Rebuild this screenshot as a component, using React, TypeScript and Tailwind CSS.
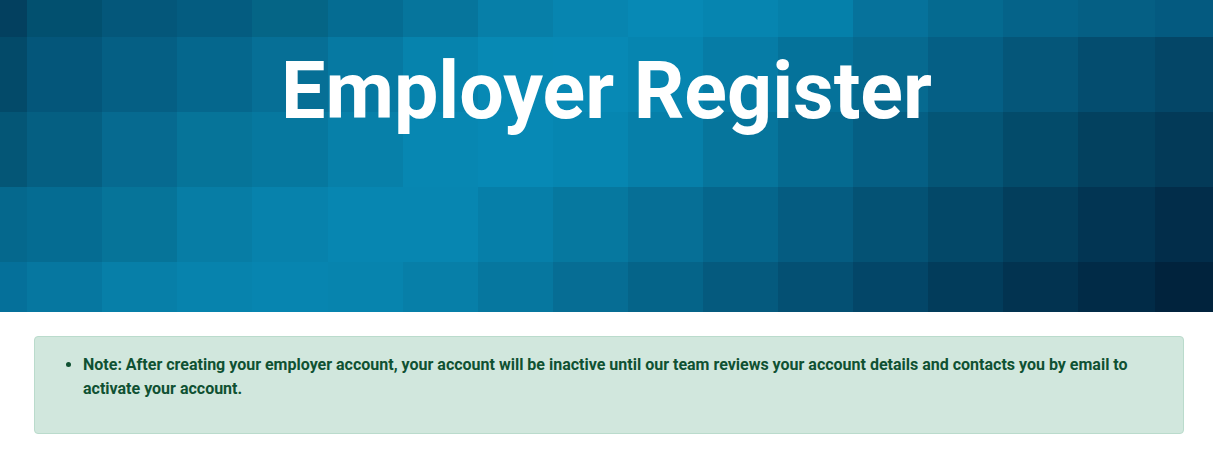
import React from 'react';

// mosaic tile colours, 5 rows x 17 columns
const tiles: string[][] = [
  ['#03405f', '#02506f', '#04577a', '#045c80', '#056586', '#056c92', '#06759c', '#077fa8', '#0785b0', '#0789b5', '#0685b0', '#0580aa', '#06729b', '#056a90', '#056389', '#055f84', '#045a80'],
  ['#034a69', '#04567a', '#055f84', '#05678d', '#066f96', '#0679a2', '#0683ad', '#0789b4', '#0789b5', '#0685b0', '#067ca6', '#05729a', '#066a90', '#055f85', '#055679', '#044d6f', '#044667'],
  ['#045676', '#055f82', '#066a90', '#067499', '#06789f', '#0780a9', '#0787b2', '#0789b5', '#0686b1', '#067fa9', '#06759c', '#056a90', '#055f84', '#045576', '#034b6a', '#03415f', '#033a58'],
  ['#05688d', '#056c92', '#067499', '#077da5', '#0782ac', '#0786b1', '#0786b1', '#067fa9', '#06789f', '#066f96', '#05668c', '#055c81', '#045274', '#034868', '#033e5c', '#023553', '#022d4a'],
  ['#05709a', '#0677a0', '#077fa8', '#0783ad', '#0785b0', '#0784ae', '#077fa8', '#06779f', '#066d94', '#056489', '#055a7e', '#045073', '#034668', '#023c5b', '#023350', '#012b47', '#01233d'],
];

const colX = [0, 27, 102, 177, 252, 328, 403, 478, 553, 628, 703, 778, 853, 928, 1003, 1078, 1155, 1213];
const rowY = [0, 37, 112, 187, 262, 312];

function Mosaic() {
  return (
    <svg className="absolute inset-0 w-full h-full" viewBox="0 0 1213 312" preserveAspectRatio="none">
      {tiles.map((row, r) =>
        row.map((c, i) => (
          <rect
            key={`${r}-${i}`}
            x={colX[i]}
            y={rowY[r]}
            width={colX[i + 1] - colX[i] + 0.5}
            height={rowY[r + 1] - rowY[r] + 0.5}
            fill={c}
          />
        ))
      )}
    </svg>
  );
}

export default function App() {
  return (
    <div className="w-[1213px] min-h-[460px] bg-white" style={{ fontFamily: 'Roboto, "Liberation Sans", sans-serif' }}>
      <header className="relative h-[312px] overflow-hidden">
        <Mosaic />
        <h1 className="relative pt-[52px] text-center text-white font-bold text-[79px] leading-none">
          Employer Register
        </h1>
      </header>

      <div className="ml-[34px] mt-6 w-[1150px] rounded border border-[#badbcc] bg-[#d1e7dd] p-4 text-[#0f5132]">
        <ul className="list-disc pl-8 mb-4 text-[16px] leading-6 font-bold">
          <li>
            Note: After creating your employer account, your account will be inactive until our team reviews your account
            details and contacts you by email to activate your account.
          </li>
        </ul>
      </div>
    </div>
  );
}
